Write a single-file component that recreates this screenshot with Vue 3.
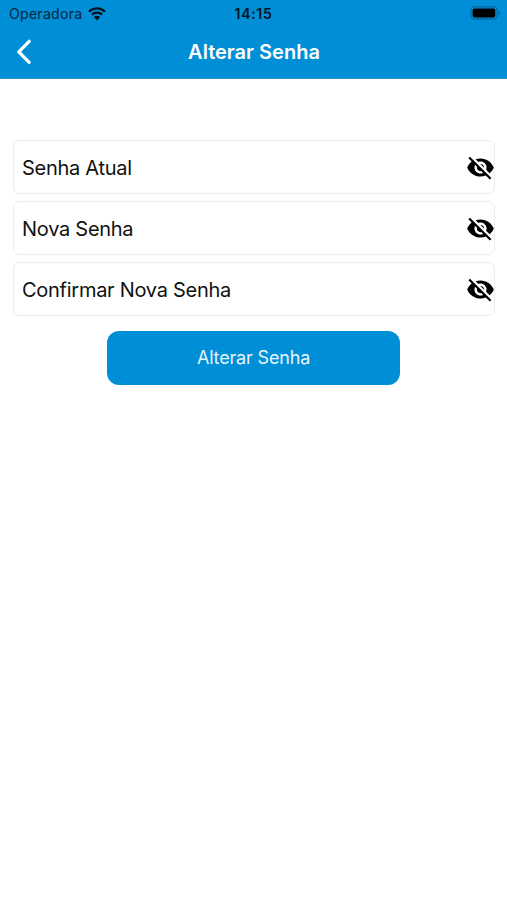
<script setup>
import { reactive } from 'vue'

const fields = reactive([
  { id: 'current', label: 'Senha Atual', value: '', visible: false },
  { id: 'new', label: 'Nova Senha', value: '', visible: false },
  { id: 'confirm', label: 'Confirmar Nova Senha', value: '', visible: false },
])

function toggle(field) {
  field.visible = !field.visible
}
</script>

<template>
  <div class="screen">
    <header class="header">
      <div class="status">
        <div class="carrier">
          <span>Operadora</span>
          <svg class="wifi" viewBox="0 0 18 14">
            <path d="M1 4.7a11.4 11.4 0 0 1 16 0M3.8 7.7a7.5 7.5 0 0 1 10.4 0" fill="none" stroke="#04131e" stroke-width="2.3" />
            <path d="M9 13.4 5.8 10a4.6 4.6 0 0 1 6.4 0z" fill="#04131e" />
          </svg>
        </div>
        <span class="time">14:15</span>
        <svg class="battery" viewBox="0 0 31 14">
          <rect x="0.8" y="0.8" width="26.4" height="12.4" rx="3.6" fill="none" stroke="#04649a" stroke-width="1.2" />
          <rect x="2.6" y="2.4" width="22.6" height="9.2" rx="2" fill="#000" />
          <path d="M28.6 4.8c2 .8 2 3.6 0 4.4z" fill="#04649a" />
        </svg>
      </div>
      <div class="navbar">
        <button class="back" aria-label="Voltar">
          <svg viewBox="0 0 16 26">
            <path d="M13.2 2.3 2.8 12.8l10.4 10.5" fill="none" stroke="#fff" stroke-width="3.2" stroke-linecap="round" stroke-linejoin="round" />
          </svg>
        </button>
        <h1 class="title">Alterar Senha</h1>
      </div>
    </header>

    <form class="form" @submit.prevent>
      <div v-for="field in fields" :key="field.id" class="field">
        <input v-model="field.value" :type="field.visible ? 'text' : 'password'" :placeholder="field.label">
        <button type="button" class="eye" @click="toggle(field)">
          <svg viewBox="0 0 24 24">
            <path d="M12 7c2.76 0 5 2.24 5 5 0 .65-.13 1.26-.36 1.83l2.92 2.92c1.51-1.26 2.7-2.89 3.43-4.75-1.73-4.39-6-7.5-11-7.5-1.4 0-2.74.25-3.98.7l2.16 2.16C10.74 7.13 11.35 7 12 7zM2 4.27l2.28 2.28.46.46C3.08 8.3 1.78 10.02 1 12c1.73 4.39 6 7.5 11 7.5 1.55 0 3.03-.3 4.38-.84l.42.42L19.73 22 21 20.73 3.27 3 2 4.27zM7.53 9.8l1.55 1.55c-.05.21-.08.43-.08.65 0 1.66 1.34 3 3 3 .22 0 .44-.03.65-.08l1.55 1.55c-.67.33-1.41.53-2.2.53-2.76 0-5-2.24-5-5 0-.79.2-1.53.53-2.2zm4.31-.78l3.15 3.15.02-.16c0-1.66-1.34-3-3-3l-.17.01z" />
          </svg>
        </button>
      </div>
      <button class="submit">Alterar Senha</button>
    </form>
  </div>
</template>

<style>
body {
  margin: 0;
  background: #fff;
}
</style>

<style scoped>
.screen {
  min-height: 900px;
  background: #fff;
  font-family: Inter, "Liberation Sans", sans-serif;
}

button {
  border: none;
  padding: 0;
  background: none;
  font-family: inherit;
  cursor: pointer;
}

svg {
  display: block;
}

.header {
  height: 79px;
  box-sizing: border-box;
  background: #008ed6;
  border-bottom: 1px solid #1a8fc9;
}

.status {
  display: grid;
  grid-template-columns: 1fr auto 1fr;
  align-items: center;
  height: 27px;
  padding: 0 6px 0 9px;
  color: #04131e;
  font-size: 14px;
}

.carrier {
  display: flex;
  align-items: center;
  gap: 6px;
  color: #05253a;
  letter-spacing: 0.3px;
}

.wifi {
  width: 18px;
  height: 14px;
}

.time {
  padding-right: 3px;
  font-weight: 600;
  letter-spacing: 0.7px;
}

.battery {
  justify-self: end;
  width: 31px;
  height: 14px;
  margin-top: -1px;
}

.navbar {
  display: grid;
  grid-template-columns: 50px 1fr 49px;
  align-items: center;
  height: 50px;
}

.back {
  padding-left: 16px;
}

.back svg {
  width: 16px;
  height: 26px;
}

.title {
  margin: 0;
  text-align: center;
  color: #fff;
  font-size: 20px;
  font-weight: 600;
}

.form {
  display: flex;
  flex-direction: column;
  gap: 7px;
  padding: 61px 12px 0 13px;
}

.field {
  display: flex;
  align-items: center;
  height: 54px;
  box-sizing: border-box;
  border: 1px solid #ededed;
  border-radius: 6px;
}

.field input {
  flex: 1;
  min-width: 0;
  padding: 2px 8px 0;
  border: none;
  outline: none;
  background: none;
  font-family: inherit;
  font-size: 20px;
  letter-spacing: -0.27px;
}

.field input::placeholder {
  color: #111;
  opacity: 1;
}

.eye {
  margin-right: -1px;
}

.eye svg {
  width: 29px;
  height: 29px;
}

.submit {
  align-self: center;
  width: 293px;
  height: 54px;
  margin: 8px 1px 0 0;
  padding-bottom: 1px;
  border-radius: 12px;
  background: #008ed6;
  color: #e4f5ff;
  font-size: 18px;
  letter-spacing: -0.17px;
}
</style>
